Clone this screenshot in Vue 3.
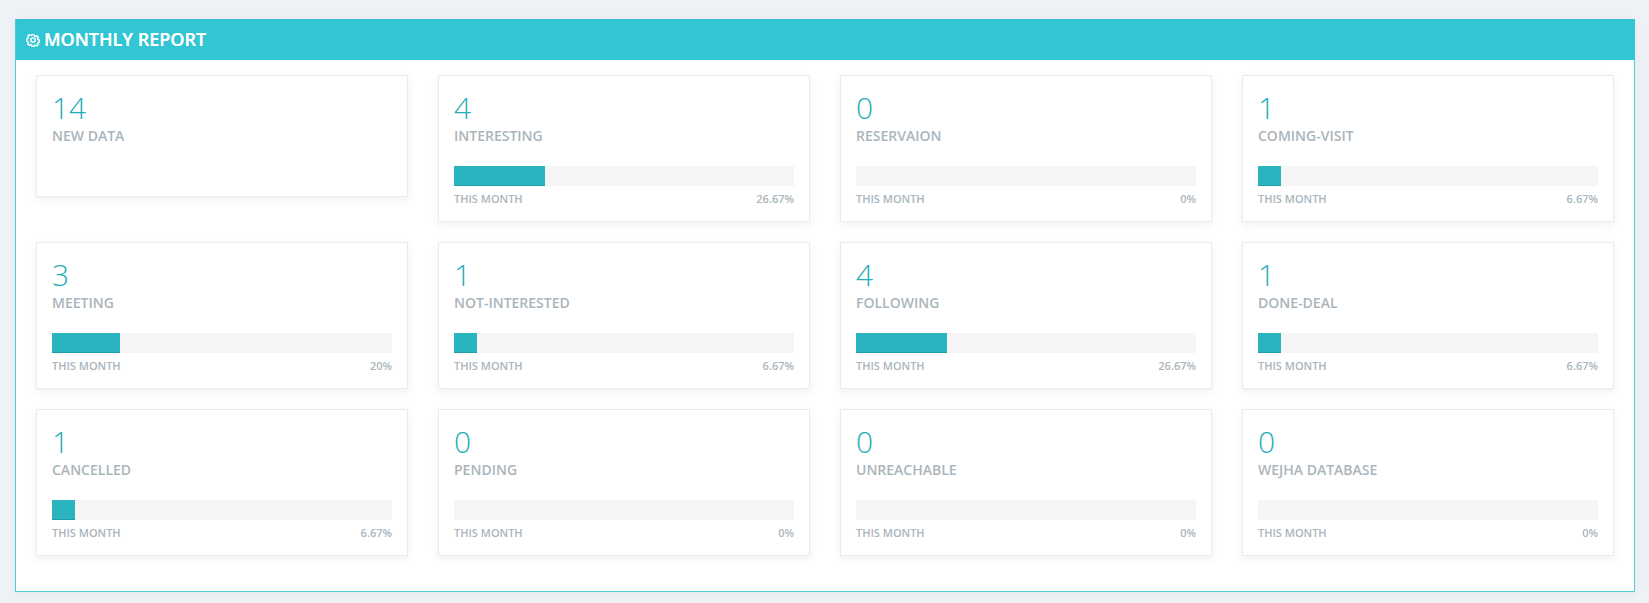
<script setup>
const cards = [
  { n: 14, label: 'NEW DATA', noBar: true },
  { n: 4, label: 'INTERESTING', pct: 26.67 },
  { n: 0, label: 'RESERVAION', pct: 0 },
  { n: 1, label: 'COMING-VISIT', pct: 6.67 },
  { n: 3, label: 'MEETING', pct: 20 },
  { n: 1, label: 'NOT-INTERESTED', pct: 6.67 },
  { n: 4, label: 'FOLLOWING', pct: 26.67 },
  { n: 1, label: 'DONE-DEAL', pct: 6.67 },
  { n: 1, label: 'CANCELLED', pct: 6.67 },
  { n: 0, label: 'PENDING', pct: 0 },
  { n: 0, label: 'UNREACHABLE', pct: 0 },
  { n: 0, label: 'WEJHA DATABASE', pct: 0 }
]
</script>

<template>
  <div class="page">
    <section class="panel">
      <header class="head">
        <svg class="gear" viewBox="-1 -1 26 26" fill="none" stroke="#fff" stroke-width="2.600" stroke-linejoin="round">
          <path d="M10 1h4l.6 2.800 1.900.8L19 3l3 3-1.600 2.500.8 1.900 2.800.6v4l-2.800.6-.8 1.900L22 19l-3 3-2.500-1.600-1.900.8L14 23h-4l-.6-2.800-1.900-.8L5 21l-3-3 1.600-2.500-.8-1.900L0 13v-4l2.800-.6.8-1.900L2 4l3-3 2.500 1.600 1.900-.8z" transform="translate(0 1)" />
          <circle cx="12" cy="12" r="4" />
        </svg>
        <span>MONTHLY REPORT</span>
      </header>
      <div class="grid">
        <article v-for="c in cards" :key="c.label" class="card" :class="{ short: c.noBar }">
          <div class="num">{{ c.n }}</div>
          <div class="label">{{ c.label }}</div>
          <template v-if="!c.noBar">
            <div class="track">
              <div v-if="c.pct" class="fill" :style="{ width: c.pct + '%' }"></div>
            </div>
            <div class="foot">
              <span>THIS MONTH</span>
              <span>{{ c.pct }}%</span>
            </div>
          </template>
        </article>
      </div>
    </section>
  </div>
</template>

<style>
html, body { margin: 0; background: #eef1f6; }
</style>

<style scoped>
.page {
  padding: 19px 14px 11px 15px;
  font-family: "Open Sans", "Noto Sans", sans-serif;
}
.panel {
  background: #fff;
  border: 1px solid #55cbd6;
  border-top: 0;
  height: 573px;
  box-sizing: border-box;
  box-shadow: 0 2px 8px rgba(60, 60, 60, .05);
}
.head {
  box-sizing: border-box;
  height: 41px;
  margin: 0 -1px 0 0;
  background: #32c6d4;
  color: #fff;
  display: flex;
  align-items: center;
  padding: 0 0 2px 10px;
  gap: 4px;
  font-size: 18px;
  font-weight: 600;
  line-height: 1;
  text-shadow: 0 0 .4px #fff;
}
.gear { width: 14px; height: 14px; flex: none; margin-top: 2px; }
.grid {
  display: grid;
  grid-template-columns: repeat(4, 372px);
  column-gap: 30px;
  row-gap: 20px;
  align-items: start;
  padding: 15px 0 0 20px;
}
.card {
  box-sizing: border-box;
  height: 147px;
  border: 1px solid #e9ebee;
  background: #fff;
  padding: 17px 15px 0;
  box-shadow: 0 3px 8px rgba(60, 60, 60, .07);
}
.card.short { height: 122px; }
.num {
  font-size: 30px;
  font-weight: 300;
  line-height: 30px;
  color: #25adb9;
}
.label {
  margin-top: 3px;
  font-size: 14px;
  font-weight: 600;
  line-height: 19px;
  color: #aab5bc;
}
.track {
  height: 20px;
  margin-top: 21px;
  background: #f5f5f5;
}
.fill {
  box-sizing: border-box;
  height: 100%;
  background: #2ab4c0;
  border-bottom: 1px solid #1f9ea9;
}
.foot {
  display: flex;
  justify-content: space-between;
  margin-top: 5px;
  font-size: 11px;
  font-weight: 600;
  line-height: 15px;
  color: #aab5bc;
}
</style>
